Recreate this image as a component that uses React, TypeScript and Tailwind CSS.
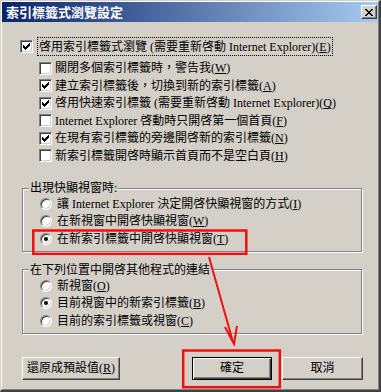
import type { ReactNode } from "react";

function Key({ k }: { k: string }) {
  return (
    <>
      (<u className="underline-offset-1">{k}</u>)
    </>
  );
}

function Check({ checked }: { checked?: boolean }) {
  return (
    <span className="flex h-[13px] w-[13px] shrink-0 items-center justify-center border border-t-[#808080] border-l-[#808080] border-r-white border-b-white bg-white shadow-[inset_1px_1px_0_#404040,inset_-1px_-1px_0_#d4d0c8]">
      {checked && (
        <svg width="7" height="7" viewBox="0 0 7 7" shapeRendering="crispEdges">
          <path
            fill="#000"
            d="M6 0h1v1h-1z M5 1h2v1h-2z M0 2h1v1h-1z M4 2h3v1h-3z M0 3h2v1h-2z M3 3h3v1h-3z M0 4h5v1h-5z M1 5h3v1h-3z M2 6h1v1h-1z"
          />
        </svg>
      )}
    </span>
  );
}

function Radio({ on }: { on?: boolean }) {
  return (
    <span className="flex h-[12px] w-[12px] shrink-0 items-center justify-center rounded-full border border-t-[#808080] border-l-[#808080] border-r-white border-b-white bg-white shadow-[inset_1px_1px_0_#404040,inset_-1px_-1px_0_#d4d0c8]">
      {on && <span className="h-[4px] w-[4px] rounded-full bg-black" />}
    </span>
  );
}

function CheckRow({ checked, children }: { checked?: boolean; children: ReactNode }) {
  return (
    <div className="flex h-[17.5px] items-center gap-[3px]">
      <Check checked={checked} />
      <span className="whitespace-nowrap">{children}</span>
    </div>
  );
}

function RadioRow({ on, children }: { on?: boolean; children: ReactNode }) {
  return (
    <div className="flex h-[17.6px] items-center gap-[5px] pl-[17px]">
      <Radio on={on} />
      <span className="whitespace-nowrap">{children}</span>
    </div>
  );
}

function Group({ title, children }: { title: string; children: ReactNode }) {
  return (
    <fieldset className="ml-[20px] w-[340px] border border-[#808080] pb-[3px] shadow-[inset_1px_1px_0_#fff,1px_1px_0_#fff]">
      <legend className="ml-[6px] bg-[#d4d0c8] px-px leading-[14px]">{title}</legend>
      {children}
    </fieldset>
  );
}

const raised =
  "flex h-[23px] items-center justify-center border border-t-white border-l-white border-r-[#404040] border-b-[#404040] shadow-[inset_-1px_-1px_0_#808080] bg-[#d4d0c8]";

export default function App() {
  return (
    <div className="relative h-[392px] w-[381px] overflow-hidden border-t border-l border-t-[#d4d0c8] border-l-[#d4d0c8] border-r-2 border-b-2 border-r-[#404040] border-b-[#404040] bg-[#d4d0c8] font-['Liberation_Serif','Noto_Sans_CJK_TC',serif] text-[12px] leading-[14px] text-black">
      <div className="flex h-full flex-col border border-t-white border-l-white border-r-[#808080] border-b-[#808080]">
        <div className="flex h-[20px] shrink-0 items-center justify-between bg-linear-to-r/srgb from-[#0a246a] to-[#a6caf0] pl-[4px] pr-[1px]">
          <span className="font-['Noto_Sans_CJK_TC',sans-serif] text-[13px] font-bold leading-[16px] text-white">
            索引標籤式瀏覽設定
          </span>
          <button className="flex h-[14px] w-[16px] items-center justify-center border border-t-white border-l-white border-r-[#404040] border-b-[#404040] bg-[#d4d0c8] shadow-[inset_-1px_-1px_0_#808080]">
            <svg width="8" height="7" viewBox="0 0 8 7" shapeRendering="crispEdges">
              <path
                fill="#000"
                d="M0 0h2v1h-2z M6 0h2v1h-2z M1 1h2v1h-2z M5 1h2v1h-2z M2 2h4v1h-4z M3 3h2v1h-2z M2 4h4v1h-4z M1 5h2v1h-2z M5 5h2v1h-2z M0 6h2v1h-2z M6 6h2v1h-2z"
              />
            </svg>
          </button>
        </div>

        <div className="ml-[18px] mt-[15px] flex h-[19px] items-center">
          <Check checked />
          <span className="ml-[4px] flex h-full items-center whitespace-nowrap border border-dotted border-black px-px">
            啓用索引標籤式瀏覽 (需要重新啓動 Internet Explorer)<Key k="E" />
          </span>
        </div>

        <div className="ml-[37px] mt-[3.5px] flex flex-col">
          <CheckRow>
            關閉多個索引標籤時，警告我<Key k="W" />
          </CheckRow>
          <CheckRow checked>
            建立索引標籤後，切換到新的索引標籤<Key k="A" />
          </CheckRow>
          <CheckRow checked>
            啓用快速索引標籤 (需要重新啓動 Internet Explorer)<Key k="Q" />
          </CheckRow>
          <CheckRow>
            Internet Explorer 啓動時只開啓第一個首頁<Key k="F" />
          </CheckRow>
          <CheckRow checked>
            在現有索引標籤的旁邊開啓新的索引標籤<Key k="N" />
          </CheckRow>
          <CheckRow>
            新索引標籤開啓時顯示首頁而不是空白頁<Key k="H" />
          </CheckRow>
        </div>

        <div className="mt-[16.5px]">
          <Group title="出現快顯視窗時:">
            <RadioRow>
              讓 Internet Explorer 決定開啓快顯視窗的方式<Key k="I" />
            </RadioRow>
            <RadioRow>
              在新視窗中開啓快顯視窗<Key k="W" />
            </RadioRow>
            <RadioRow on>
              在新索引標籤中開啓快顯視窗<Key k="T" />
            </RadioRow>
          </Group>
        </div>

        <div className="mt-[11px]">
          <Group title="在下列位置中開啓其他程式的連結">
            <RadioRow>
              新視窗<Key k="O" />
            </RadioRow>
            <RadioRow on>
              目前視窗中的新索引標籤<Key k="B" />
            </RadioRow>
            <RadioRow>
              目前的索引標籤或視窗<Key k="C" />
            </RadioRow>
          </Group>
        </div>

        <div className="ml-[20px] mt-[23px] flex">
          <button className={`${raised} w-[98px]`}>
            還原成預設值<Key k="R" />
          </button>
          <button className="ml-[72px] flex h-[23px] w-[80px] items-center justify-center border border-black bg-[#d4d0c8] shadow-[inset_1px_1px_0_#fff,inset_-1px_-1px_0_#404040,inset_-2px_-2px_0_#808080]">
            確定
          </button>
          <button className={`${raised} ml-[10px] w-[81px]`}>取消</button>
        </div>
      </div>

      <svg className="pointer-events-none absolute left-0 top-0" width="381" height="392" viewBox="0 0 381 392">
        <g fill="none" stroke="#f00f0f" strokeWidth="2.5">
          <rect x="32.3" y="229.5" width="213" height="23.3" />
          <rect x="182.2" y="349.5" width="96.6" height="36.7" />
          <path d="M208 256 L232 341" strokeWidth="2" />
          <path d="M224 326 L233 343 L236 325" strokeWidth="2" />
        </g>
      </svg>
    </div>
  );
}
